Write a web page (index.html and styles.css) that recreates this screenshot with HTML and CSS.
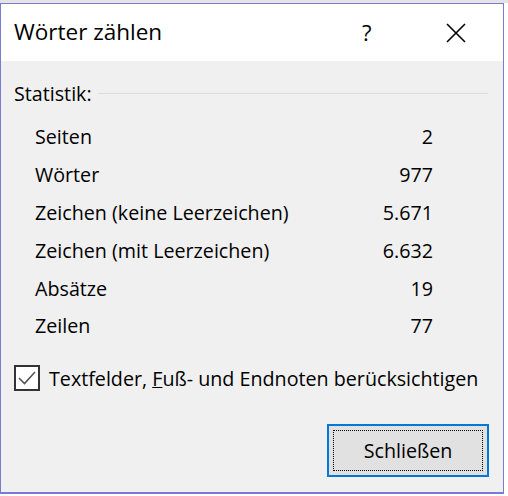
FILE: index.html
```html
<!DOCTYPE html>
<html>
	<head>
		<meta charset="UTF-8">
		<title>Wörter zählen</title>
		<link rel="stylesheet" href="styles.css">
	</head>
	<body>
		<div class="dialog">
			<div class="titlebar">
				<span class="title">Wörter zählen</span>
				<span class="help">?</span>
				<span class="close">
					<svg width="20" height="20" viewBox="0 0 20 20"><path d="M1 1 L19 19 M19 1 L1 19" stroke="#000" stroke-width="1.6" fill="none"/></svg>
				</span>
			</div>
			<div class="content">
				<div class="group">
					<span class="grouplabel">Statistik:</span>
					<span class="groupline"></span>
				</div>
				<ul class="stats">
					<li><span>Seiten</span><span class="num">2</span></li>
					<li><span>Wörter</span><span class="num">977</span></li>
					<li><span>Zeichen (keine Leerzeichen)</span><span class="num">5.671</span></li>
					<li><span>Zeichen (mit Leerzeichen)</span><span class="num">6.632</span></li>
					<li><span>Absätze</span><span class="num">19</span></li>
					<li><span>Zeilen</span><span class="num">77</span></li>
				</ul>
				<label class="check">
					<span class="box">
						<svg width="18" height="14" viewBox="0 0 18 14"><path d="M1 7 L6.5 12.5 L17 1" stroke="#555" stroke-width="1.6" fill="none"/></svg>
					</span>
					<span>Textfelder, <u>F</u>uß- und Endnoten berücksichtigen</span>
				</label>
				<div class="buttons">
					<button class="btn"><span class="focus">Schließen</span></button>
				</div>
			</div>
		</div>
	</body>
</html>
```
FILE: styles.css
```css
html,body{margin:0;padding:0;}
body{
	width:508px;height:496px;overflow:hidden;
	background:linear-gradient(#e4e4e4 3px,#fff 3px);
	font-family:"Open Sans","Noto Sans",sans-serif;
	color:#000;
}
.dialog{
	margin-top:3px;
	width:502px;height:488px;
	border:1px solid #7b7bd6;border-bottom-width:2px;
	background-color:#f0f0f0;
	display:flex;flex-direction:column;
}
.titlebar{
	height:57px;background-color:#fff;
	display:flex;align-items:center;
	padding-left:13px;
}
.title{font-size:22.5px;flex:1;padding-bottom:2px;}
.help{font-size:22px;width:30px;margin-right:54px;padding-bottom:2px;}
.close{width:20px;height:20px;margin-right:37px;display:flex;}
.content{flex:1;padding:0 13px;font-size:19.7px;line-height:27px;}
.group{display:flex;align-items:center;margin-top:19px;}
.grouplabel{margin-right:6px;}
.groupline{flex:1;height:1px;background-color:#dcdcdc;margin-right:2px;}
.stats{margin:0;padding:0;list-style:none;margin-top:11px;}
.stats li{
	display:flex;justify-content:space-between;
	height:37.8px;align-items:center;
	padding-left:21px;width:398px;
}
.check{display:flex;align-items:center;margin-top:20px;}
.box{
	width:22px;height:22px;border:2px solid #333;background-color:#fff;
	display:flex;align-items:center;justify-content:center;
	margin-right:9px;
}
.buttons{display:flex;justify-content:flex-end;margin-top:32px;margin-right:1px;}
.btn{
	width:162px;height:53px;
	border:2px solid #0078d7;background-color:#e1e1e1;
	padding:4px;font-family:inherit;font-size:19.7px;color:#000;
	display:flex;
}
.focus{flex:1;border:1px dotted #000;display:flex;align-items:center;justify-content:center;}
```
